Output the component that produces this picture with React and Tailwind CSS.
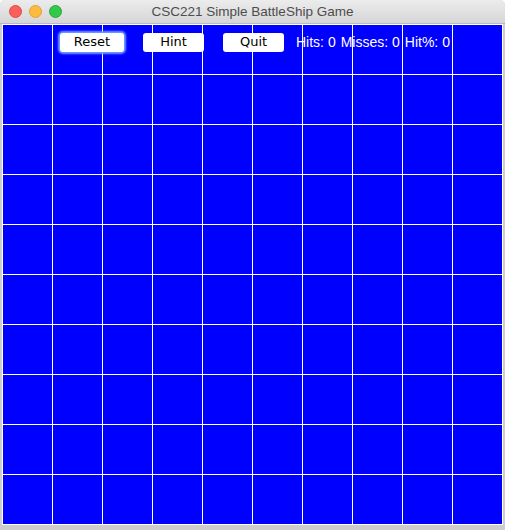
import React from "react";

export default function App() {
  const cells = Array.from({ length: 100 });
  return (
    <div className="w-[505px] h-[530px] bg-white overflow-hidden">
      <div className="w-[505px] h-[530px] bg-[#cdcdcd] rounded-t-[5px] flex flex-col overflow-hidden">
        <div className="h-[24px] shrink-0 relative flex items-center justify-center bg-gradient-to-b from-[#ececec] to-[#d6d6d6] border-b border-[#b9b9b9]">
          <div className="absolute left-[9px] top-[5px] flex gap-[7px]">
            <div className="w-[13px] h-[13px] rounded-full bg-[#fc605c] border border-[#de4a45]" />
            <div className="w-[13px] h-[13px] rounded-full bg-[#fdbc40] border border-[#dea033]" />
            <div className="w-[13px] h-[13px] rounded-full bg-[#34c84a] border border-[#27a83a]" />
          </div>
          <span className="text-[13.5px] text-[#4d4d4d] leading-none" style={{ fontFamily: '"Liberation Sans", Arial, sans-serif' }}>
            CSC221 Simple BattleShip Game
          </span>
        </div>
        <div className="pl-[2px] relative">
          <div className="w-[501px] h-[501px] bg-white p-[1px] grid grid-cols-10 grid-rows-10 gap-[1px]">
            {cells.map((_, i) => (
              <div key={i} className="bg-[#0000ff]" />
            ))}
          </div>
          <div className="absolute left-0 top-[8px] w-[505px] h-[20px] flex items-center">
            <button
              className="ml-[60px] w-[64px] h-[19px] bg-white rounded-[3px] text-[13px] text-black flex items-center justify-center shadow-[0_0_2px_2px_#6f9cff]"
              style={{ fontFamily: '"DejaVu Sans", sans-serif' }}
            >
              Reset
            </button>
            <button
              className="ml-[19px] w-[61px] h-[19px] bg-white rounded-[3px] text-[13px] text-black flex items-center justify-center"
              style={{ fontFamily: '"DejaVu Sans", sans-serif' }}
            >
              Hint
            </button>
            <button
              className="ml-[19px] w-[61px] h-[19px] bg-white rounded-[3px] text-[13px] text-black flex items-center justify-center"
              style={{ fontFamily: '"DejaVu Sans", sans-serif' }}
            >
              Quit
            </button>
            <div
              className="ml-[12px] flex gap-[5px] text-white text-[14px] leading-none"
              style={{ fontFamily: '"Liberation Sans", Arial, sans-serif' }}
            >
              <span>Hits: 0</span>
              <span>Misses: 0</span>
              <span>Hit%: 0</span>
            </div>
          </div>
        </div>
      </div>
    </div>
  );
}
